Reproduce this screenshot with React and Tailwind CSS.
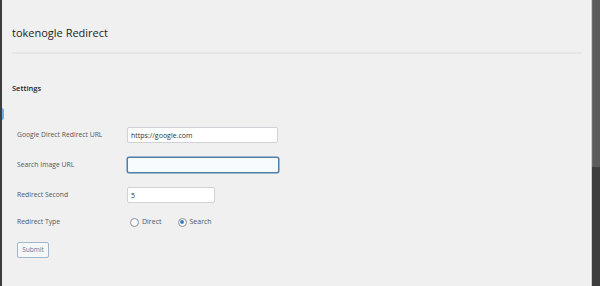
import * as React from 'react';

const font = { fontFamily: '"Open Sans", "Noto Sans", "Liberation Sans", sans-serif' };

function Row({ label, children }) {
  return (
    <div className="flex items-center h-[30px]">
      <div className="w-[110px] text-[6.8px] text-[#50575e]">{label}</div>
      <div className="flex items-center">{children}</div>
    </div>
  );
}

function Radio({ label, checked }) {
  return (
    <label className="flex items-center gap-[3px] text-[7px] text-[#50575e]">
      <span className="w-[9px] h-[9px] rounded-full border border-[#8c8f94] bg-white flex items-center justify-center">
        {checked && <span className="w-[4px] h-[4px] rounded-full bg-[#3582c4]" />}
      </span>
      {label}
    </label>
  );
}

export default function App() {
  const [type, setType] = React.useState('search');

  return (
    <div className="w-[600px] h-[286px] flex bg-[#f0f0f1] overflow-hidden" style={font}>
      <div className="w-[2px] bg-[#3c3c3c]" />
      <div className="relative flex-1 pl-[10px] pr-[8px]">
        {/* focus ring sliver left edge */}
        <div className="absolute left-0 top-[108px] w-[2px] h-[12px] bg-[#72aee6] rounded-r" />
        <h1 className="pt-[25px] h-[52px] text-[11px] text-[#1d2327]">tokenogle Redirect</h1>
        <div className="h-[2px] bg-[#e6e6e8]" />
        <div className="pt-[29px] text-[7.5px] font-semibold text-[#1d2327]">Settings</div>
        <div className="pl-[5px] pt-[26px]">
          <Row label="Google Direct Redirect URL">
            <input
              defaultValue="https://google.com"
              className="w-[151px] h-[16px] px-[3px] text-[7px] text-[#2c3338] bg-white border border-[#d0d1d4] rounded-[2px] outline-none"
            />
          </Row>
          <Row label="Search Image URL">
            <input
              className="w-[152px] h-[16px] px-[3px] text-[7px] bg-[#f8fbfd] border border-[#4f7ea7] rounded-[2px] outline-none shadow-[0_0_0_0.5px_#4f7ea7]"
            />
          </Row>
          <Row label="Redirect Second">
            <input
              defaultValue="5"
              className="w-[88px] h-[16px] px-[3px] text-[7px] text-[#2c3338] bg-white border border-[#d0d1d4] rounded-[2px] outline-none"
            />
          </Row>
          <div className="flex items-center h-[24px]">
            <div className="w-[110px] text-[6.8px] text-[#50575e]">Redirect Type</div>
            <div className="flex items-center gap-[16px] pl-[3px]" onClick={() => setType(type === 'search' ? 'direct' : 'search')}>
              <Radio label="Direct" checked={type === 'direct'} />
              <Radio label="Search" checked={type === 'search'} />
            </div>
          </div>
          <button className="mt-[8px] w-[32px] h-[16px] text-[6.5px] text-[#5a7a96] bg-[#f6f7f7] border border-[#9fb6cb] rounded-[2px]">
            Submit
          </button>
        </div>
      </div>
      <div className="w-[1px] bg-[#f6f6f7]" />
      <div className="w-[1px] bg-[#c8c8c8]" />
      <div className="w-[8px] flex flex-col bg-[#3e3e3e]">
        <div className="h-[167px] bg-[#5c5c5c] border-l border-[#6a6a6a]" />
      </div>
    </div>
  );
}
